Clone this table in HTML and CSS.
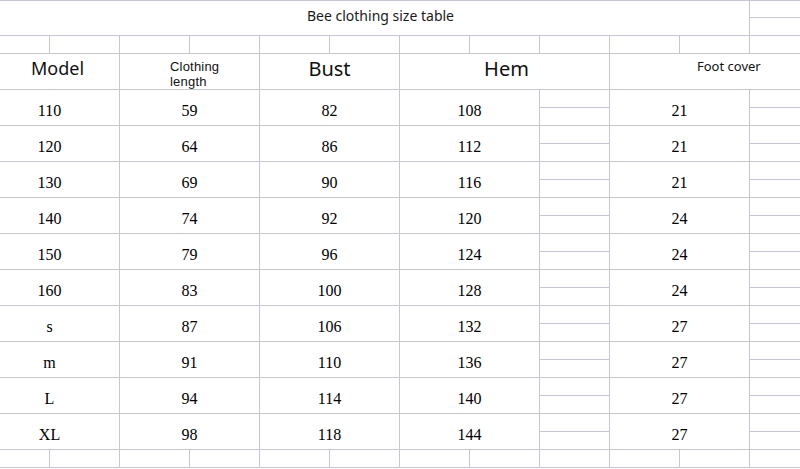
FILE: index.html
```html
<!DOCTYPE html>
<html>
<head>
<meta charset="utf-8">
<link rel="stylesheet" href="styles.css">
<title>Bee clothing size table</title>
</head>
<body>
<div class="sheet">
  <div class="c title top">Bee clothing size table</div>
  <div class="c top"></div>
  <div class="c"></div>

  <div class="c"></div><div class="c"></div><div class="c"></div><div class="c"></div>
  <div class="c"></div><div class="c"></div><div class="c"></div><div class="c"></div>
  <div class="c"></div><div class="c"></div><div class="c"></div><div class="c"></div>

  <div class="c m2 h-model">Model</div>
  <div class="c m2 h-small h-len"><span class="ln">Clothing</span><span class="ln">length</span></div>
  <div class="c m2 h-big">Bust</div>
  <div class="c m3 h-big h-hem">Hem</div>
  <div class="c m3 h-small h-foot">Foot cover</div>

  <div class="c m2 d d-model">110</div><div class="c m2 d">59</div><div class="c m2 d">82</div><div class="c m2 d">108</div><div class="c"></div><div class="c m2 d">21</div><div class="c"></div><div class="c"></div><div class="c"></div>
  <div class="c m2 d d-model">120</div><div class="c m2 d">64</div><div class="c m2 d">86</div><div class="c m2 d">112</div><div class="c"></div><div class="c m2 d">21</div><div class="c"></div><div class="c"></div><div class="c"></div>
  <div class="c m2 d d-model">130</div><div class="c m2 d">69</div><div class="c m2 d">90</div><div class="c m2 d">116</div><div class="c"></div><div class="c m2 d">21</div><div class="c"></div><div class="c"></div><div class="c"></div>
  <div class="c m2 d d-model">140</div><div class="c m2 d">74</div><div class="c m2 d">92</div><div class="c m2 d">120</div><div class="c"></div><div class="c m2 d">24</div><div class="c"></div><div class="c"></div><div class="c"></div>
  <div class="c m2 d d-model">150</div><div class="c m2 d">79</div><div class="c m2 d">96</div><div class="c m2 d">124</div><div class="c"></div><div class="c m2 d">24</div><div class="c"></div><div class="c"></div><div class="c"></div>
  <div class="c m2 d d-model">160</div><div class="c m2 d">83</div><div class="c m2 d">100</div><div class="c m2 d">128</div><div class="c"></div><div class="c m2 d">24</div><div class="c"></div><div class="c"></div><div class="c"></div>
  <div class="c m2 d d-model">s</div><div class="c m2 d">87</div><div class="c m2 d">106</div><div class="c m2 d">132</div><div class="c"></div><div class="c m2 d">27</div><div class="c"></div><div class="c"></div><div class="c"></div>
  <div class="c m2 d d-model">m</div><div class="c m2 d">91</div><div class="c m2 d">110</div><div class="c m2 d">136</div><div class="c"></div><div class="c m2 d">27</div><div class="c"></div><div class="c"></div><div class="c"></div>
  <div class="c m2 d d-model">L</div><div class="c m2 d">94</div><div class="c m2 d">114</div><div class="c m2 d">140</div><div class="c"></div><div class="c m2 d">27</div><div class="c"></div><div class="c"></div><div class="c"></div>
  <div class="c m2 d d-model">XL</div><div class="c m2 d">98</div><div class="c m2 d">118</div><div class="c m2 d">144</div><div class="c"></div><div class="c m2 d">27</div><div class="c"></div><div class="c"></div><div class="c"></div>

  <div class="c"></div><div class="c"></div><div class="c"></div><div class="c"></div>
  <div class="c"></div><div class="c"></div><div class="c"></div><div class="c"></div>
  <div class="c"></div><div class="c"></div><div class="c"></div><div class="c"></div>
</div>
</body>
</html>
```

FILE: styles.css
```css
html, body {
  margin: 0;
  padding: 0;
  background: #ffffff;
  overflow: hidden;
}

.sheet {
  display: grid;
  width: 820px;
  grid-template-columns: 50px repeat(11, 70px);
  grid-template-rows: repeat(26, 18px);
  font-family: "Noto Sans", "Liberation Sans", sans-serif;
  color: #111111;
}

.c {
  box-sizing: border-box;
  border-right: 1px solid #c6c6d4;
  border-bottom: 1px solid #c6c6d4;
  overflow: hidden;
  white-space: nowrap;
}

.top {
  border-top: 1px solid #c6c6d4;
}

.title {
  grid-column: span 11;
  grid-row: span 2;
  font-size: 14px;
  line-height: 14px;
  padding: 8px 0 0 12px;
  text-align: center;
  color: #1a1a1a;
}

.m2 {
  grid-column: span 2;
  grid-row: span 2;
}

.m3 {
  grid-column: span 3;
  grid-row: span 2;
}

.h-model {
  font-size: 18px;
  line-height: 18px;
  padding: 5px 4px 0 0;
  text-align: center;
}

.h-big {
  font-size: 20px;
  line-height: 20px;
  padding-top: 5px;
  text-align: center;
}

.h-hem {
  padding-left: 4px;
}

.h-small {
  font-size: 13px;
  line-height: 14px;
  padding-top: 5px;
}

.h-len {
  display: flex;
  flex-direction: column;
  align-items: flex-start;
  padding-left: 50px;
  padding-top: 5px;
}

.ln {
  display: block;
  font-family: "Liberation Sans", Arial, sans-serif;
  font-size: 13px;
  line-height: 15px;
  letter-spacing: 0.2px;
}

.h-foot {
  padding-left: 87px;
  padding-top: 5px;
}

.d {
  font-family: "Liberation Serif", "Times New Roman", serif;
  font-size: 16px;
  line-height: 16px;
  padding-top: 13px;
  text-align: center;
  color: #000000;
}

.d-model {
  padding-right: 20px;
}
```
